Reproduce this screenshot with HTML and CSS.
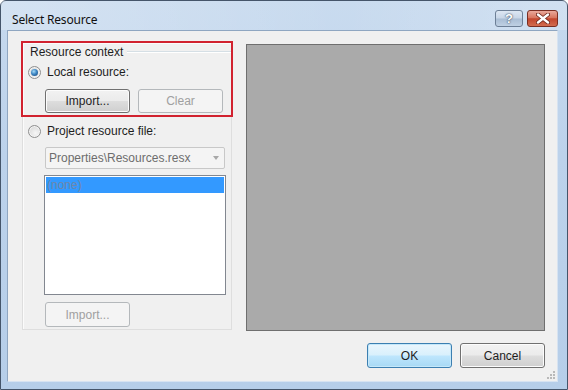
FILE: index.html
```html
<!DOCTYPE html>
<html lang="en">
<head>
    <meta charset="UTF-8">
    <title>Select Resource</title>
    <link rel="stylesheet" href="styles.css">
</head>
<body>
    <div class="window">
        <!-- Title bar -->
        <div class="titlebar">
            <span class="title">Select Resource</span>
            <div class="caption-btns">
                <div class="cap-btn help">?</div>
                <div class="cap-btn close">
                    <svg width="14" height="11" viewBox="0 0 14 11">
                        <path d="M2 1.5 L12 9.5 M12 1.5 L2 9.5" stroke="#6b2418" stroke-width="4" stroke-linecap="round"/>
                        <path d="M2 1.5 L12 9.5 M12 1.5 L2 9.5" stroke="#ffffff" stroke-width="2.4" stroke-linecap="round"/>
                    </svg>
                </div>
            </div>
        </div>

        <div class="client">
            <div class="content-row">
                <div class="side-panel">
                    <div class="highlight"></div>

                    <div class="group-label">
                        <span>Resource context</span>
                        <span class="group-line"></span>
                    </div>

                    <label class="radio-row first">
                        <span class="radio checked"></span>
                        <span>Local resource:</span>
                    </label>

                    <div class="btn-row">
                        <button class="btn">Import...</button>
                        <button class="btn disabled">Clear</button>
                    </div>

                    <label class="radio-row second">
                        <span class="radio"></span>
                        <span>Project resource file:</span>
                    </label>

                    <div class="combo">
                        <span>Properties\Resources.resx</span>
                        <span class="combo-arrow"></span>
                    </div>

                    <div class="listbox">
                        <div class="list-item selected">(none)</div>
                    </div>

                    <button class="btn disabled import-bottom">Import...</button>
                </div>

                <div class="preview"></div>
            </div>

            <div class="dialog-btns">
                <button class="btn default">OK</button>
                <button class="btn">Cancel</button>
            </div>

            <div class="grip">
                <span></span><span></span><span></span><span></span><span></span><span></span>
            </div>
        </div>
    </div>
</body>
</html>
```

FILE: styles.css
```css
:root {
    --face: #f0f0f0;
    --text: #1e1e1e;
    --disabled: #8d8d8d;
}

* {
    box-sizing: border-box;
}

body {
    margin: 0;
    padding: 0;
    font-family: 'Liberation Sans', Arial, sans-serif;
    font-size: 12px;
    color: var(--text);
    background: #ffffff;
}

.window {
    width: 568px;
    height: 390px;
    border: 1px solid #45556a;
    border-radius: 6px 6px 0 0;
    background: linear-gradient(180deg, #c6d9ee 0%, #bcd2eb 40%, #b6cee9 100%);
    padding: 0 9px 7px 6px;
    display: flex;
    flex-direction: column;
    position: relative;
}

.titlebar {
    height: 29px;
    display: flex;
    align-items: center;
    justify-content: space-between;
    background: linear-gradient(90deg, rgba(255,255,255,0.25) 0%, rgba(255,255,255,0.05) 60%, rgba(255,255,255,0.2) 100%);
    margin: 0 -9px 0 -6px;
    padding: 0 9px 0 11px;
}

.title {
    font-family: 'Noto Sans', sans-serif;
    font-size: 12px;
    color: #111;
    padding-top: 7px;
    letter-spacing: -0.2px;
}

.caption-btns {
    display: flex;
    gap: 4px;
    align-self: flex-start;
    margin-top: 9px;
    margin-right: 0;
}

.cap-btn {
    height: 17px;
    border-radius: 3px;
    display: flex;
    align-items: center;
    justify-content: center;
}

.help {
    width: 28px;
    border: 1px solid #6d7f96;
    background: linear-gradient(180deg, #dde7f3 0%, #c8d6e7 48%, #a9bdd4 52%, #bfd0e3 100%);
    color: #ffffff;
    font-weight: bold;
    font-size: 13px;
    text-shadow: 0 0 2px #3d4f66, 0 0 1px #3d4f66;
}

.close {
    width: 31px;
    border: 1px solid #7a2e22;
    background: linear-gradient(180deg, #e9a99b 0%, #d8765f 45%, #c2462d 52%, #d26c4f 100%);
}

.client {
    flex: 1;
    background: var(--face);
    border: 1px solid #8fa6c1;
    border-right-color: #d7e3f1;
    border-bottom-color: #d7e3f1;
    padding: 11px 12px 0 14px;
    position: relative;
}

.content-row {
    display: flex;
    align-items: flex-start;
}

.side-panel {
    width: 210px;
    height: 288px;
    border: 1px solid #dedede;
    box-shadow: inset 1px 1px 0 #fbfbfb;
    position: relative;
    display: flex;
    flex-direction: column;
    align-items: flex-start;
    padding-left: 5px;
}

.highlight {
    position: absolute;
    left: -2px;
    top: -2px;
    width: 212px;
    height: 76px;
    border: 2px solid #d1222f;
}

.group-label {
    margin-top: 1px;
    margin-left: 2px;
    height: 16px;
    line-height: 16px;
    display: flex;
    align-items: center;
    width: 202px;
}

.group-line {
    flex: 1;
    height: 1px;
    background: #d5dfe5;
    border-bottom: 1px solid #ffffff;
    margin-left: 4px;
    box-sizing: content-box;
}

.radio-row {
    display: flex;
    align-items: center;
    gap: 6px;
    height: 16px;
}

.radio-row.first {
    margin-top: 4px;
}

.radio-row.second {
    margin-top: 10px;
}

.radio {
    width: 13px;
    height: 13px;
    border-radius: 50%;
    border: 1px solid #8f8f8f;
    background: radial-gradient(circle at 60% 65%, #f6f6f6 0%, #e2e2e2 55%, #cfcfcf 100%);
    box-shadow: inset 0 0 0 1px #f4f4f4;
    display: flex;
    align-items: center;
    justify-content: center;
}

.radio.checked::after {
    content: "";
    width: 7px;
    height: 7px;
    border-radius: 50%;
    background: radial-gradient(circle at 40% 35%, #a7dcf7 0%, #3d86c4 45%, #17406f 100%);
}

.btn-row {
    display: flex;
    gap: 8px;
    margin-top: 9px;
    margin-left: 17px;
}

.btn {
    width: 85px;
    height: 24px;
    font-family: inherit;
    font-size: 12px;
    color: var(--text);
    border: 1px solid #707070;
    border-radius: 3px;
    background: linear-gradient(180deg, #f2f2f2 0%, #ebebeb 48%, #dddddd 52%, #cfcfcf 100%);
    box-shadow: inset 0 0 0 1px #fcfcfc;
    padding: 0;
}

.btn.disabled {
    color: #a0a0a0;
    border-color: #b4b8bb;
    background: #f4f4f4;
    box-shadow: none;
}

.btn.default {
    border-color: #3c7fb1;
    background: linear-gradient(180deg, #eaf6fd 0%, #d9f0fc 48%, #bee6fd 52%, #a7d9f5 100%);
    box-shadow: inset 0 0 0 1px #c5e8fa;
}

.combo {
    margin-top: 8px;
    margin-left: 17px;
    width: 180px;
    height: 22px;
    border: 1px solid #c8c8c8;
    border-radius: 2px;
    background: #f4f4f4;
    color: #6d6d6d;
    display: flex;
    align-items: center;
    justify-content: space-between;
    padding: 0 5px 0 3px;
}

.combo-arrow {
    width: 0;
    height: 0;
    border-left: 3.5px solid transparent;
    border-right: 3.5px solid transparent;
    border-top: 4px solid #a8a8a8;
}

.listbox {
    margin-top: 6px;
    margin-left: 16px;
    width: 182px;
    height: 120px;
    border: 1px solid #828790;
    background: #ffffff;
    padding: 1px;
}

.list-item {
    height: 16px;
    line-height: 16px;
    padding-left: 1px;
}

.list-item.selected {
    background: #3399ff;
    color: #6e87a8;
}

.import-bottom {
    margin-top: 7px;
    margin-left: 17px;
    height: 25px;
}

.preview {
    width: 299px;
    height: 287px;
    margin-top: 2px;
    margin-left: 14px;
    background: #aaaaaa;
    border: 1px solid #6f6f6f;
}

.dialog-btns {
    display: flex;
    justify-content: flex-end;
    gap: 8px;
    margin-top: 12px;
}

.dialog-btns .btn {
    height: 25px;
}

.grip {
    position: absolute;
    right: 2px;
    bottom: 2px;
    width: 9px;
    height: 9px;
}

.grip span {
    position: absolute;
    width: 2px;
    height: 2px;
    background: #b9b9b9;
}

.grip span:nth-child(1) { right: 0; bottom: 0; }
.grip span:nth-child(2) { right: 3px; bottom: 0; }
.grip span:nth-child(3) { right: 6px; bottom: 0; }
.grip span:nth-child(4) { right: 0; bottom: 3px; }
.grip span:nth-child(5) { right: 3px; bottom: 3px; }
.grip span:nth-child(6) { right: 0; bottom: 6px; }
```
